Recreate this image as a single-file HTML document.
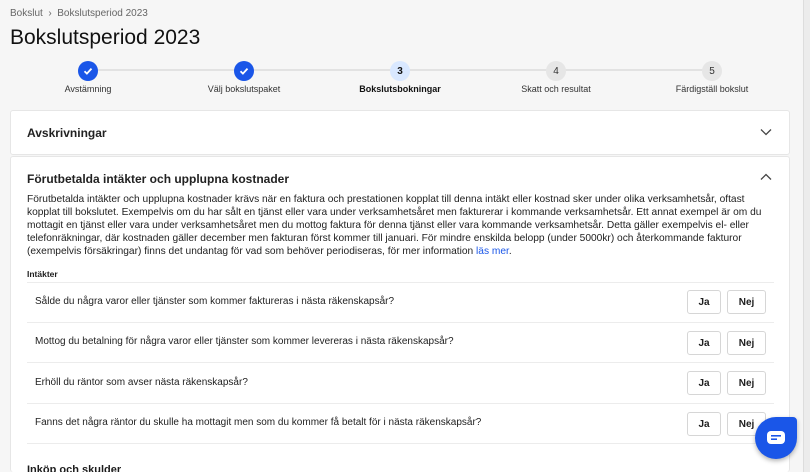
<!DOCTYPE html>
<html><head><meta charset="utf-8"><style>
*{box-sizing:border-box;margin:0;padding:0}
html{width:810px;height:472px;overflow:hidden}
body{width:810px;height:472px;overflow:hidden;background:#f6f6f6;font-family:"Liberation Sans",sans-serif;color:#1d1d1d;position:relative}
.abs{position:absolute}
.sb{left:803px;top:0;width:7px;height:472px;background:#ececec;border-left:1px solid #ddd}
.crumb{left:10px;top:8px;font-size:10px;color:#666}
h1{position:absolute;left:10px;top:26px;font-size:21px;font-weight:400;color:#111}
.line{top:69px;left:88px;width:624px;height:2px;background:#e2e2e2}
.c{width:20px;height:20px;border-radius:50%;top:61px;display:flex;align-items:center;justify-content:center;font-size:10px;font-weight:bold}
.done{background:#1a56e8}
.cur{background:#d9e8ff;color:#111}
.todo{background:#e6e6e6;color:#333;font-weight:400}
.lbl{top:84px;font-size:9px;color:#333;width:140px;text-align:center}
.card{left:10px;width:780px;background:#fff;border:1px solid #e6e6e6;border-radius:3px}
.t{font-size:12px;font-weight:bold;color:#222}
.p{left:27px;top:193px;width:750px;font-size:10.2px;line-height:13px;color:#222}
.sep{left:27px;width:747px;height:1px;background:#ececec}
.q{left:35px;font-size:10px;color:#222}
.btn{width:34px;height:24px;border:1px solid #d6d6d6;border-radius:3px;background:#fff;font-size:10px;font-weight:bold;display:flex;align-items:center;justify-content:center}
.nej{width:39px}
</style></head><body>
<div class="abs sb"></div>
<div class="abs crumb">Bokslut &nbsp;›&nbsp; Bokslutsperiod 2023</div>
<h1>Bokslutsperiod 2023</h1>
<div class="abs line"></div>
<div class="abs c done" style="left:78px"><svg width="12" height="12" viewBox="0 0 12 12"><path d="M2.5 6.2l2.4 2.4 4.6-5" stroke="#fff" stroke-width="1.8" fill="none"/></svg></div>
<div class="abs c done" style="left:234px"><svg width="12" height="12" viewBox="0 0 12 12"><path d="M2.5 6.2l2.4 2.4 4.6-5" stroke="#fff" stroke-width="1.8" fill="none"/></svg></div>
<div class="abs c cur" style="left:390px">3</div>
<div class="abs c todo" style="left:546px">4</div>
<div class="abs c todo" style="left:702px">5</div>
<div class="abs lbl" style="left:18px">Avstämning</div>
<div class="abs lbl" style="left:174px">Välj bokslutspaket</div>
<div class="abs lbl" style="left:330px;font-weight:bold;color:#111">Bokslutsbokningar</div>
<div class="abs lbl" style="left:486px">Skatt och resultat</div>
<div class="abs lbl" style="left:642px">Färdigställ bokslut</div>

<div class="abs card" style="top:110px;height:45px"></div>
<div class="abs t" style="left:27px;top:126px">Avskrivningar</div>
<svg class="abs" style="left:759px;top:127px" width="14" height="10" viewBox="0 0 14 10"><path d="M2 2.5l5 5 5-5" stroke="#444" stroke-width="1.3" fill="none"/></svg>

<div class="abs card" style="top:156px;height:316px;border-bottom:none"></div>
<div class="abs t" style="left:27px;top:172px">Förutbetalda intäkter och upplupna kostnader</div>
<svg class="abs" style="left:759px;top:172px" width="14" height="10" viewBox="0 0 14 10"><path d="M2 7.5l5-5 5 5" stroke="#444" stroke-width="1.3" fill="none"/></svg>
<div class="abs p">Förutbetalda intäkter och upplupna kostnader krävs när en faktura och prestationen kopplat till denna intäkt eller kostnad sker under olika verksamhetsår, oftast kopplat till bokslutet. Exempelvis om du har sålt en tjänst eller vara under verksamhetsåret men fakturerar i kommande verksamhetsår. Ett annat exempel är om du mottagit en tjänst eller vara under verksamhetsåret men du mottog faktura för denna tjänst eller vara kommande verksamhetsår. Detta gäller exempelvis el- eller telefonräkningar, där kostnaden gäller december men fakturan först kommer till januari. För mindre enskilda belopp (under 5000kr) och återkommande fakturor (exempelvis försäkringar) finns det undantag för vad som behöver periodiseras, för mer information <span style="color:#1a56e8">läs mer</span>.</div>
<div class="abs" style="left:27px;top:269px;font-size:8.5px;font-weight:bold">Intäkter</div>
<div class="abs sep" style="top:282px"></div>
<div class="abs sep" style="top:322px"></div>
<div class="abs sep" style="top:362px"></div>
<div class="abs sep" style="top:403px"></div>
<div class="abs sep" style="top:443px"></div>
<div class="abs q" style="top:296px">Sålde du några varor eller tjänster som kommer faktureras i nästa räkenskapsår?</div>
<div class="abs q" style="top:336px">Mottog du betalning för några varor eller tjänster som kommer levereras i nästa räkenskapsår?</div>
<div class="abs q" style="top:377px">Erhöll du räntor som avser nästa räkenskapsår?</div>
<div class="abs q" style="top:417px">Fanns det några räntor du skulle ha mottagit men som du kommer få betalt för i nästa räkenskapsår?</div>
<div class="abs btn" style="left:687px;top:290px">Ja</div><div class="abs btn nej" style="left:727px;top:290px">Nej</div>
<div class="abs btn" style="left:687px;top:331px">Ja</div><div class="abs btn nej" style="left:727px;top:331px">Nej</div>
<div class="abs btn" style="left:687px;top:371px">Ja</div><div class="abs btn nej" style="left:727px;top:371px">Nej</div>
<div class="abs btn" style="left:687px;top:412px">Ja</div><div class="abs btn nej" style="left:727px;top:412px">Nej</div>
<div class="abs" style="left:27px;top:464px;font-size:11px;font-weight:bold">Inköp och skulder</div>
<div class="abs" style="left:755px;top:417px;width:42px;height:42px;border-radius:21px 4px 21px 21px;background:#1a56e8;box-shadow:0 2px 5px rgba(0,0,0,.3);display:flex;align-items:center;justify-content:center">
<svg width="20" height="16" viewBox="0 0 20 16"><rect x="1" y="1" width="18" height="13" rx="4" fill="#fff"/><rect x="5" y="5" width="10" height="1.6" fill="#1a56e8"/><rect x="5" y="8.4" width="6" height="1.6" fill="#1a56e8"/></svg></div>
</body></html>
